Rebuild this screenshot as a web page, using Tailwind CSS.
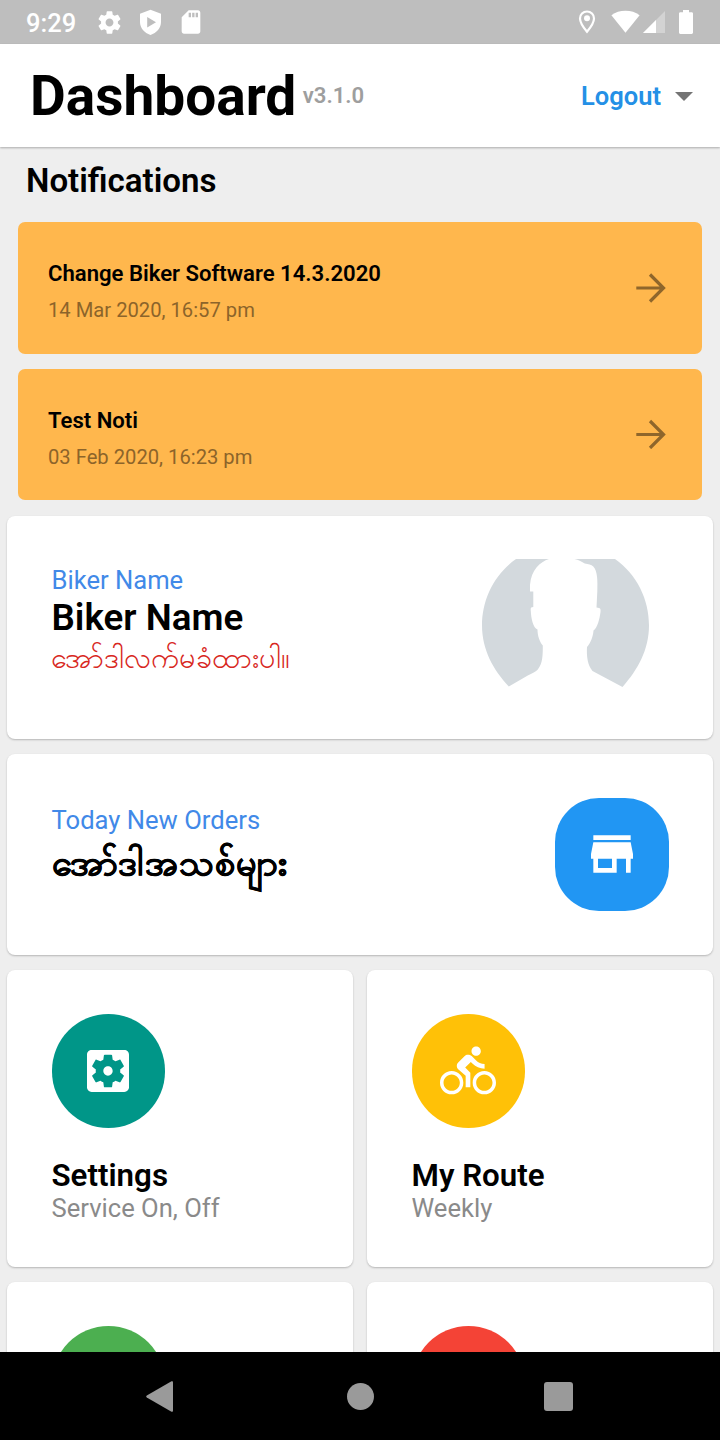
<!DOCTYPE html>
<html lang="en">
<head>
<meta charset="utf-8">
<title>Dashboard</title>
<script src="https://cdn.jsdelivr.net/npm/@tailwindcss/browser@4"></script>
</head>
<body class="bg-[#eeeeee]">
<div class="flex h-[1440px] w-[720px] flex-col overflow-hidden bg-[#eeeeee] font-[Roboto,sans-serif] text-black">

  <!-- Status bar -->
  <div class="flex h-[44px] shrink-0 items-center bg-[#bebebe] pl-[26px] pr-[27px] text-white">
    <span class="w-[70px] pt-px text-[25.500px] font-medium leading-[44px]">9:29</span>
    <svg class="size-[27px]" viewBox="0 0 24 24" fill="currentColor"><path d="M19.43 12.98c.04-.32.07-.64.07-.98s-.03-.66-.07-.98l2.11-1.65c.19-.15.24-.42.12-.64l-2-3.46c-.12-.22-.39-.3-.61-.22l-2.49 1c-.52-.4-1.08-.73-1.69-.98l-.38-2.65C14.46 2.18 14.25 2 14 2h-4c-.25 0-.46.18-.49.42l-.38 2.65c-.61.25-1.17.59-1.69.98l-2.49-1c-.23-.09-.49 0-.61.22l-2 3.46c-.13.22-.07.49.12.64l2.11 1.65c-.04.32-.07.65-.07.98s.03.66.07.98l-2.11 1.65c-.19.15-.24.42-.12.64l2 3.46c.12.22.39.3.61.22l2.49-1c.52.4 1.08.73 1.69.98l.38 2.65c.03.24.24.42.49.42h4c.25 0 .46-.18.49-.42l.38-2.65c.61-.25 1.17-.59 1.69-.98l2.49 1c.23.09.49 0 .61-.22l2-3.46c.12-.22.07-.49-.12-.64l-2.11-1.65zM12 15.5c-1.93 0-3.500-1.570-3.500-3.500s1.570-3.500 3.500-3.500 3.500 1.570 3.500 3.500-1.570 3.500-3.500 3.500z"/></svg>
    <svg class="ml-[13.500px] size-[27px]" viewBox="0 0 27 27" fill="currentColor"><path fill-rule="evenodd" d="M13.500 .8 24 4.800v8.200c0 6-4.400 11-10.500 13C7.400 24 3 19 3 13V4.800zM10.200 8.100v10.400l8.800-5.200z"/></svg>
    <svg class="ml-[13.500px] size-[28px]" viewBox="0 0 24 24" fill="currentColor"><path d="M18 2h-8L4.020 8 4 20c0 1.100.9 2 2 2h12c1.100 0 2-.9 2-2V4c0-1.100-.9-2-2-2zm-6 6h-2V4h2v4zm3 0h-2V4h2v4zm3 0h-2V4h2v4z"/></svg>
    <div class="flex-1"></div>
    <svg class="h-[24px] w-[18px]" viewBox="0 0 18 24" fill="none"><path d="M9 1.500c4 0 7 3 7 6.900C16 13.300 9 21.700 9 21.700S2 13.300 2 8.400c0-3.900 3-6.900 7-6.900z" stroke="white" stroke-width="2.200"/><circle cx="9" cy="8.200" r="3" fill="white"/></svg>
    <svg class="ml-[15px] h-[24px] w-[29px]" viewBox="0 0 29 24" fill="white"><path d="M.4 5.200C4.500 2.200 9 .8 14.500.8s10 1.400 14.100 4.400L14.500 22.800z"/></svg>
    <svg class="ml-[3.500px] size-[22px]" viewBox="0 0 22 22" fill="white"><path d="M22 0v22H0z" opacity=".32"/><path d="M13 9v13H0z"/></svg>
    <svg class="ml-[14px] h-[24px] w-[14px]" viewBox="0 0 14 24" fill="white"><path d="M4 0h6v2.300h2.700c.7 0 1.300.6 1.300 1.300v19c0 .8-.6 1.400-1.300 1.400H1.300C.6 24 0 23.400 0 22.600v-19c0-.7.6-1.300 1.300-1.300H4z"/></svg>
  </div>

  <!-- App bar -->
  <header class="z-10 flex h-[103px] shrink-0 items-center bg-white pl-[30px] pr-[27.500px] shadow-[0_1px_2px_rgba(0,0,0,0.28)]">
    <h1 class="text-[55px] font-bold leading-[64px]">Dashboard</h1>
    <span class="-mt-px ml-[6.500px] text-[22.100px] font-semibold leading-[28px] text-[#9e9e9e]">v3.1.0</span>
    <div class="flex-1"></div>
    <span class="text-[25.500px] font-semibold leading-[30px] text-[#2490e6]">Logout</span>
    <svg class="ml-[13.500px] mt-px h-[9px] w-[18px]" viewBox="0 0 18 9"><path d="M0 0h18L9 9z" fill="#747474"/></svg>
  </header>

  <main class="flex min-h-0 flex-1 flex-col overflow-hidden">
    <h2 class="mt-[14px] pl-[26px] text-[33.100px] font-semibold leading-[40px]">Notifications</h2>

    <div class="mx-[18px] mt-[21px] flex h-[131.500px] w-[683.500px] shrink-0 items-center rounded-[7px] bg-[#ffb74d] pl-[30px] pr-[36px]">
      <div class="flex-1 pt-[7px]">
        <div class="text-[22.100px] font-semibold leading-[34px]">Change Biker Software 14.3.2020</div>
        <div class="mt-[3px] text-[20.200px] leading-[34px] text-[#8c642a]">14 Mar 2020, 16:57 pm</div>
      </div>
      <svg class="size-[30px]" viewBox="0 0 30 30" fill="none" stroke="#8f662b" stroke-width="3.200"><path d="M.3 15h27M14 1.500 27.500 15 14 28.500"/></svg>
    </div>

    <div class="mx-[18px] mt-[15px] flex h-[131.500px] w-[683.500px] shrink-0 items-center rounded-[7px] bg-[#ffb74d] pl-[30px] pr-[36px]">
      <div class="flex-1 pt-[7.500px]">
        <div class="text-[22.100px] font-semibold leading-[34px]">Test Noti</div>
        <div class="mt-[3px] text-[20.200px] leading-[34px] text-[#8c642a]">03 Feb 2020, 16:23 pm</div>
      </div>
      <svg class="size-[30px]" viewBox="0 0 30 30" fill="none" stroke="#8f662b" stroke-width="3.200"><path d="M.3 15.500h27M14 2 27.500 15.500 14 29"/></svg>
    </div>

    <section class="mx-[7px] mt-[15.500px] flex h-[223.500px] shrink-0 justify-between rounded-[8px] bg-white pl-[44.500px] pr-[64px] shadow-[0_1px_2px_rgba(0,0,0,0.24)]">
      <div class="pt-[49.500px]">
        <div class="text-[25.600px] leading-[30px] text-[#4189e8]">Biker Name</div>
        <div class="text-[36.800px] font-semibold leading-[45px]">Biker Name</div>
        <div class="-ml-px h-[40px] whitespace-nowrap text-[28.700px] leading-[37px] text-[#d8281e]">အော်ဒါလက်မခံထားပါ။</div>
      </div>
      <svg class="mt-[43.500px] h-[128px] w-[167px]" viewBox="482 559.500 167 128" fill="#d3d9dd"><path d="M516 559.500h33c-9 3-18 11-19 26v6.500h3.300v15.500c-2.500 0-2.800 1-2.500 4 .3 7 2.200 17 6.700 18.500 0 6 2 12 5.300 16 0 9 0 18-5 24-1.500 2-6 4-10 6l-19 11C493 670 482 650 482 626c0-26 12-51 34-66.500z"/><path d="M574.500 559.500H615c22 15.500 34 40.500 34 66.500 0 24-11 44-26.500 61.500l-30-16c-5-6-6-15-5.500-24 3.500-4 6-10 6.500-16.500 4-3 6-11 7-18.500.3-3 .3-4-4-4.500l.8-16c.3-10 .5-20-4-25-2-2-5-2.500-8.500-3-4-2-6-4-10.300-4.500z"/></svg>
    </section>

    <section class="mx-[7px] mt-[15px] flex h-[201px] shrink-0 justify-between rounded-[8px] bg-white pl-[44.500px] pr-[44.500px] shadow-[0_1px_2px_rgba(0,0,0,0.24)]">
      <div class="pt-[51px]">
        <div class="text-[25.600px] leading-[30px] text-[#4189e8]">Today New Orders</div>
        <div class="h-[60px] whitespace-nowrap text-[36px] font-bold leading-[57px] tracking-[0.800px] [-webkit-text-stroke:0.4px_black]">အော်ဒါအသစ်များ</div>
      </div>
      <div class="mt-[43.500px] flex size-[113.500px] items-center justify-center rounded-[44px] bg-[#2196f3]">
        <svg class="size-[56px]" viewBox="0 0 24 24" fill="white"><path d="M20 4H4v2h16V4zm1 10v-2l-1-5H4l-1 5v2h1v6h10v-6h4v6h2v-6h1zm-9 4H6v-4h6v4z"/></svg>
      </div>
    </section>

    <div class="mx-[7px] mt-[15px] grid grid-cols-2 gap-x-[14px] gap-y-[15px]">
      <section class="h-[297px] rounded-[8px] bg-white pl-[44.500px] pt-[44px] shadow-[0_1px_2px_rgba(0,0,0,0.24)]">
        <div class="flex size-[113.500px] items-center justify-center rounded-full bg-[#009688]">
          <svg class="size-[56px]" viewBox="0 0 24 24" fill="white"><path d="M12 10c-1.100 0-2 .9-2 2s.9 2 2 2 2-.9 2-2-.9-2-2-2zm7-7H5c-1.110 0-2 .9-2 2v14c0 1.100.89 2 2 2h14c1.110 0 2-.9 2-2V5c0-1.100-.89-2-2-2zm-1.750 9c0 .23-.02.46-.05.68l1.480 1.160c.13.11.17.3.08.45l-1.400 2.420c-.09.15-.27.21-.43.15l-1.740-.7c-.36.28-.76.51-1.180.69l-.26 1.850c-.03.17-.18.3-.35.3h-2.800c-.17 0-.32-.13-.35-.29l-.26-1.850c-.43-.18-.82-.41-1.180-.69l-1.740.7c-.16.06-.34 0-.43-.15l-1.400-2.420c-.09-.15-.05-.34.08-.45l1.480-1.160c-.03-.23-.05-.46-.05-.69 0-.23.02-.46.05-.68l-1.480-1.160c-.13-.11-.17-.3-.08-.45l1.400-2.420c.09-.15.27-.21.43-.15l1.740.7c.36-.28.76-.51 1.180-.69l.26-1.850c.03-.17.18-.3.35-.3h2.800c.17 0 .32.13.35.29l.26 1.850c.43.18.82.41 1.180.69l1.740-.7c.16-.06.34 0 .43.15l1.400 2.420c.09.15.05.34-.08.45l-1.480 1.160c.03.23.05.46.05.69z"/></svg>
        </div>
        <div class="mt-[29.500px] text-[31.300px] font-semibold leading-[37px]">Settings</div>
        <div class="-mt-px text-[25.600px] leading-[30px] text-[#8a8a8a]">Service On, Off</div>
      </section>
      <section class="h-[297px] rounded-[8px] bg-white pl-[44.500px] pt-[44px] shadow-[0_1px_2px_rgba(0,0,0,0.24)]">
        <div class="flex size-[113.500px] items-center justify-center rounded-full bg-[#ffc107]">
          <svg class="size-[56px]" viewBox="0 0 24 24" fill="white"><path d="M15.500 5.500c1.100 0 2-.9 2-2s-.9-2-2-2-2 .9-2 2 .9 2 2 2zM5 12c-2.800 0-5 2.200-5 5s2.200 5 5 5 5-2.200 5-5-2.200-5-5-5zm0 8.500c-1.900 0-3.500-1.600-3.500-3.500s1.600-3.500 3.500-3.500 3.500 1.600 3.500 3.500-1.600 3.500-3.500 3.500zm5.800-10l2.400-2.400.8.800c1.300 1.300 3 2.100 5.100 2.100V9c-1.500 0-2.700-.6-3.600-1.500l-1.900-1.900c-.5-.4-1-.6-1.600-.6s-1.100.2-1.400.6L7.800 8.400c-.4.4-.6.9-.6 1.400 0 .6.200 1.100.6 1.400L11 14v5h2v-6.200l-2.200-2.300zM19 12c-2.800 0-5 2.200-5 5s2.200 5 5 5 5-2.200 5-5-2.200-5-5-5zm0 8.500c-1.900 0-3.500-1.600-3.500-3.500s1.600-3.500 3.500-3.500 3.500 1.600 3.500 3.500-1.600 3.500-3.500 3.500z"/></svg>
        </div>
        <div class="mt-[29.500px] text-[31.300px] font-semibold leading-[37px]">My Route</div>
        <div class="-mt-px text-[25.600px] leading-[30px] text-[#8a8a8a]">Weekly</div>
      </section>
      <section class="h-[297px] rounded-[8px] bg-white pl-[44.500px] pt-[44px] shadow-[0_1px_2px_rgba(0,0,0,0.24)]">
        <div class="size-[113.500px] rounded-full bg-[#4caf50]"></div>
      </section>
      <section class="h-[297px] rounded-[8px] bg-white pl-[44.500px] pt-[44px] shadow-[0_1px_2px_rgba(0,0,0,0.24)]">
        <div class="size-[113.500px] rounded-full bg-[#f44336]"></div>
      </section>
    </div>
  </main>

  <!-- System navigation -->
  <nav class="flex h-[88px] shrink-0 items-center bg-black pl-[146px]">
    <svg class="h-[31px] w-[27px]" viewBox="0 0 27 31" fill="#9a9a9a"><path d="M25.500.3Q27-.3 27 1.300v28.400q0 1.600-1.500 1L.8 16.500q-1.200-1 0-2z"/></svg>
    <div class="ml-[173.500px] size-[27px] rounded-full bg-[#9a9a9a]"></div>
    <div class="ml-[170.500px] size-[29px] rounded-[3px] bg-[#9a9a9a]"></div>
  </nav>
</div>
</body>
</html>
